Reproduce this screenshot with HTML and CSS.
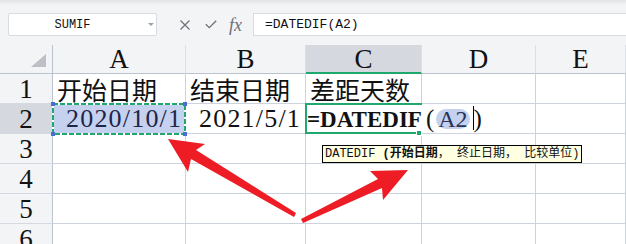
FILE: index.html
```html
<!DOCTYPE html>
<html lang="zh-CN">
<head>
    <title>DATEDIF</title>
    <meta charset="utf-8">
    <link rel="stylesheet" href="styles.css">
</head>
<body>
<div class="bar">
    <div class="namebox">
        <span class="name">SUMIF</span>
        <span class="drop"></span>
    </div>
    <div class="tools">
        <svg class="icon-x" width="10" height="10" viewBox="0 0 10 10">
            <path d="M0.5 0.5 L9.5 9.5 M9.5 0.5 L0.5 9.5" stroke="#6b7079" stroke-width="1.2" fill="none"/>
        </svg>
        <svg class="icon-ok" width="12" height="9" viewBox="0 0 12 9">
            <path d="M0.8 4.2 L4.3 7.6 L11.2 0.8" stroke="#6b7079" stroke-width="1.3" fill="none"/>
        </svg>
        <span class="fx">fx</span>
    </div>
    <div class="formula">=DATEDIF(A2)</div>
</div>

<div class="sheet">
    <div class="corner">
        <svg width="15" height="13" viewBox="0 0 15 13"><polygon points="15,0 15,13 0,13" fill="#bcbfc5"/></svg>
    </div>
    <div class="col-head">A</div>
    <div class="col-head">B</div>
    <div class="col-head sel">C</div>
    <div class="col-head">D</div>
    <div class="col-head">E</div>

    <div class="row-head">1</div>
    <div class="cell cjk">开始日期</div>
    <div class="cell cjk">结束日期</div>
    <div class="cell cjk">差距天数</div>
    <div class="cell"></div>
    <div class="cell"></div>

    <div class="row-head sel">2</div>
    <div class="cell date ref">
        2020/10/1
        <svg class="ants" width="140" height="38" viewBox="0 0 140 38">
            <rect x="4" y="4" width="132" height="30" fill="none" stroke="#fff" stroke-width="2"/>
            <rect x="4" y="4" width="132" height="30" fill="none" stroke="#1ea86e" stroke-width="2" stroke-dasharray="5 2"/>
            <rect x="2" y="2" width="4" height="4" fill="#4a6cd4"/>
            <rect x="134" y="2" width="4" height="4" fill="#4a6cd4"/>
            <rect x="2" y="32" width="4" height="4" fill="#4a6cd4"/>
            <rect x="134" y="32" width="4" height="4" fill="#4a6cd4"/>
        </svg>
    </div>
    <div class="cell date">2021/5/1</div>
    <div class="cell active">
        <span class="fn">=DATEDIF</span><span class="paren open">(</span><span class="pill">A2</span><span class="cursor"></span><span class="paren">)</span>
    </div>
    <div class="cell"></div>
    <div class="cell"></div>

    <div class="row-head">3</div>
    <div class="cell"></div><div class="cell"></div><div class="cell"></div><div class="cell"></div><div class="cell"></div>
    <div class="row-head">4</div>
    <div class="cell"></div><div class="cell"></div><div class="cell"></div><div class="cell"></div><div class="cell"></div>
    <div class="row-head">5</div>
    <div class="cell"></div><div class="cell"></div><div class="cell"></div><div class="cell"></div><div class="cell"></div>
    <div class="row-head">6</div>
    <div class="cell"></div><div class="cell"></div><div class="cell"></div><div class="cell"></div><div class="cell"></div>
</div>

<div class="tip">DATEDIF <b>(开始日期</b>，&nbsp;终止日期，&nbsp;比较单位)</div>

<svg class="arrows" width="626" height="244" viewBox="0 0 626 244">
    <polygon points="168,139 205,144 196,150 296,213 294,217 191,159 188,172" fill="#ee1d25"/>
    <polygon points="408,170 370,171 378,179 301,219 303,223 382,188 383,200" fill="#ee1d25"/>
</svg>
</body>
</html>
```

FILE: styles.css
```css
body {
    margin: 0;
    width: 626px;
    height: 244px;
    overflow: hidden;
    position: relative;
    background: #fff;
    font-family: "Liberation Serif", serif;
    color: #111;
}

/* formula bar */
.bar {
    display: flex;
    align-items: center;
    height: 45px;
    box-sizing: border-box;
    padding: 13px 0 9px 8px;
    background: linear-gradient(#e2e3e6, #f3f4f6 5px);
}

.namebox {
    display: flex;
    align-items: center;
    width: 149px;
    height: 23px;
    box-sizing: border-box;
    border: 1px solid #d8dbe0;
    border-radius: 2px;
    background: #fff;
}

.name {
    flex: 1;
    text-align: center;
    padding-right: 12px;
    font: 12px "Liberation Mono", monospace;
}

.drop {
    margin-right: 2px;
    border-left: 3px solid transparent;
    border-right: 3px solid transparent;
    border-top: 3px solid #9aa0a8;
}

.tools {
    display: flex;
    align-items: center;
    width: 96px;
}

.icon-x {
    margin-left: 23px;
}

.icon-ok {
    margin-left: 15px;
}

.fx {
    margin-left: 12px;
    font: italic 18px "Liberation Serif", serif;
    color: #6b7079;
    line-height: 18px;
}

.formula {
    flex: 1;
    height: 23px;
    box-sizing: border-box;
    border: 1px solid #d8dbe0;
    border-right: none;
    background: #fff;
    padding-left: 11px;
    font: 13px/21px "Liberation Mono", monospace;
}

/* grid */
.sheet {
    display: grid;
    grid-template-columns: 53px 133px 120px 116px 114px 90px;
    grid-template-rows: 29px repeat(6, 30px);
}

.sheet > div {
    box-sizing: border-box;
    border-right: 1px solid #cdd3de;
    border-bottom: 1px solid #cdd3de;
    white-space: nowrap;
}

.corner {
    display: flex;
    justify-content: flex-end;
    align-items: flex-end;
    padding: 0 6px 6px 0;
    background: #f3f4f6;
    border-right-color: #bcc3d0 !important;
    border-bottom-color: #bcc3d0 !important;
}

.col-head {
    background: #f3f4f6;
    border-right-color: #dcdfe4 !important;
    border-bottom-color: #bcc3d0 !important;
    text-align: center;
    font-size: 27px;
    line-height: 27px;
    padding-top: 1px;
}

.col-head.sel {
    background: #d5d8de;
    border-bottom: 2px solid #1ea86e !important;
}

.row-head {
    background: #f3f4f6;
    border-right-color: #bcc3d0 !important;
    border-bottom-color: #d3d8e1 !important;
    text-align: center;
    font-size: 27px;
    line-height: 27px;
    padding-top: 2px;
}

.row-head.sel {
    background: #d5d8de;
}

.cell.cjk {
    padding: 2px 0 0 4px;
    font: 25px/27px "Noto Sans CJK SC", sans-serif;
}

.cell.date {
    padding-left: 13px;
    font-size: 26px;
    line-height: 29px;
    letter-spacing: 1.2px;
}

.cell.ref {
    position: relative;
    background: #c6d1ef;
    color: #1c2647;
}

.ants {
    position: absolute;
    left: -4px;
    top: -4px;
}

.cell.active {
    position: relative;
    z-index: 1;
    padding-left: 1px;
    border-right-color: transparent !important;
    line-height: 29px;
}

.cell.active::after {
    content: "";
    position: absolute;
    left: -1px;
    top: -1px;
    right: -1px;
    bottom: -1px;
    border: 2px solid #1ea86e;
    border-right: none;
}

.cell.active::before {
    content: "";
    position: absolute;
    right: -1px;
    bottom: -3px;
    width: 4px;
    height: 4px;
    background: #1ea86e;
    border: 1px solid #fff;
    z-index: 2;
}

.fn {
    font-weight: bold;
    font-size: 23px;
}

.paren {
    font-size: 25px;
}

.paren.open {
    margin: 0 2px 0 4px;
}

.pill {
    display: inline-block;
    padding: 0 2px;
    border-radius: 10px;
    background: #c6d1ef;
    color: #27345b;
    font-size: 24px;
    line-height: 20px;
}

.cursor {
    display: inline-block;
    width: 1px;
    height: 24px;
    margin-left: 3px;
    background: #000;
    vertical-align: -3px;
}

/* overlays */
.tip {
    position: absolute;
    left: 322px;
    top: 145px;
    height: 18px;
    box-sizing: border-box;
    padding: 0 2px;
    border: 1px solid #000;
    background: #ffffe1;
    font: 12px/16px "Liberation Mono", "Noto Sans CJK SC", monospace;
    white-space: nowrap;
}

.arrows {
    position: absolute;
    left: 0;
    top: 0;
    pointer-events: none;
}
```
